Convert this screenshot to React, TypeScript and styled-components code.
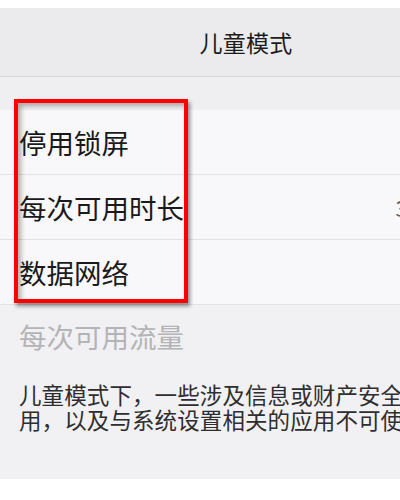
import React from 'react';
import styled, { createGlobalStyle } from 'styled-components';

const GlobalStyle = createGlobalStyle`
    html, body {
        margin: 0;
        padding: 0;
        background: #ffffff;
    }
    body {
        font-family: "Noto Sans CJK SC", "Noto Sans", sans-serif;
    }
`;

const Screen = styled.div`
    width: 400px;
    height: 500px;
    overflow: hidden;
    background: #ffffff;
    padding-top: 8px;
    box-sizing: border-box;
`;

const Page = styled.div`
    background: #f1f0f3;
    height: 471px;
    overflow: hidden;
`;

const Header = styled.header`
    height: 68px;
    display: flex;
    align-items: center;
    justify-content: center;
    padding-left: 92px;
    background: #ebeaed;
    border-bottom: 1px solid #d3d2d5;
    font-size: 23px;
    color: #1c1c1c;
    letter-spacing: 0.3px;
`;

const Gap = styled.div`
    height: 33px;
    background: #efeef1;
`;

const List = styled.ul`
    list-style: none;
    margin: 0;
    padding: 0;
    position: relative;
    background: #f8f7fa;
    border-bottom: 1px solid #e3e2e5;
`;

const Row = styled.li`
    height: 64px;
    display: flex;
    align-items: center;
    justify-content: space-between;
    padding-left: 19px;
    font-size: 27.5px;
    color: #1a1a1a;

    & + & {
        border-top: 1px solid #e3e2e5;
    }
`;

const RowValue = styled.span`
    font-size: 22px;
    color: #555;
    margin-right: -64px;
`;

const Highlight = styled.div`
    position: absolute;
    top: -11px;
    left: 14px;
    width: 174px;
    height: 204px;
    box-sizing: border-box;
    border: 4px solid #ff0000;
    box-shadow: 2px 3px 4px rgba(0, 0, 0, 0.45), inset 3px 3px 5px rgba(0, 0, 0, 0.3);
    pointer-events: none;
`;

const DisabledLabel = styled.div`
    padding: 13px 0 0 19px;
    height: 44px;
    font-size: 27.5px;
    color: #b4b3b6;
    line-height: 36px;
`;

const Note = styled.p`
    margin: 20px 0 0 19px;
    font-size: 22.5px;
    letter-spacing: 0.1px;
    line-height: 25px;
    color: #2e2e2e;
    white-space: nowrap;
`;

const rows = [
    { label: '停用锁屏', value: '' },
    { label: '每次可用时长', value: '30分钟' },
    { label: '数据网络', value: '' },
];

export default function App() {
    return (<Screen>
        <GlobalStyle />
        <Page>
            <Header>儿童模式</Header>
            <Gap />
            <List>
                {rows.map(row => (<Row key={row.label}>
                    <span>{row.label}</span>
                    {row.value && <RowValue>{row.value}</RowValue>}
                </Row>))}
                <Highlight />
            </List>
            <DisabledLabel>每次可用流量</DisabledLabel>
            <Note>
                儿童模式下，一些涉及信息或财产安全的应<br />
                用，以及与系统设置相关的应用不可使用。
            </Note>
        </Page>
    </Screen>);
}
